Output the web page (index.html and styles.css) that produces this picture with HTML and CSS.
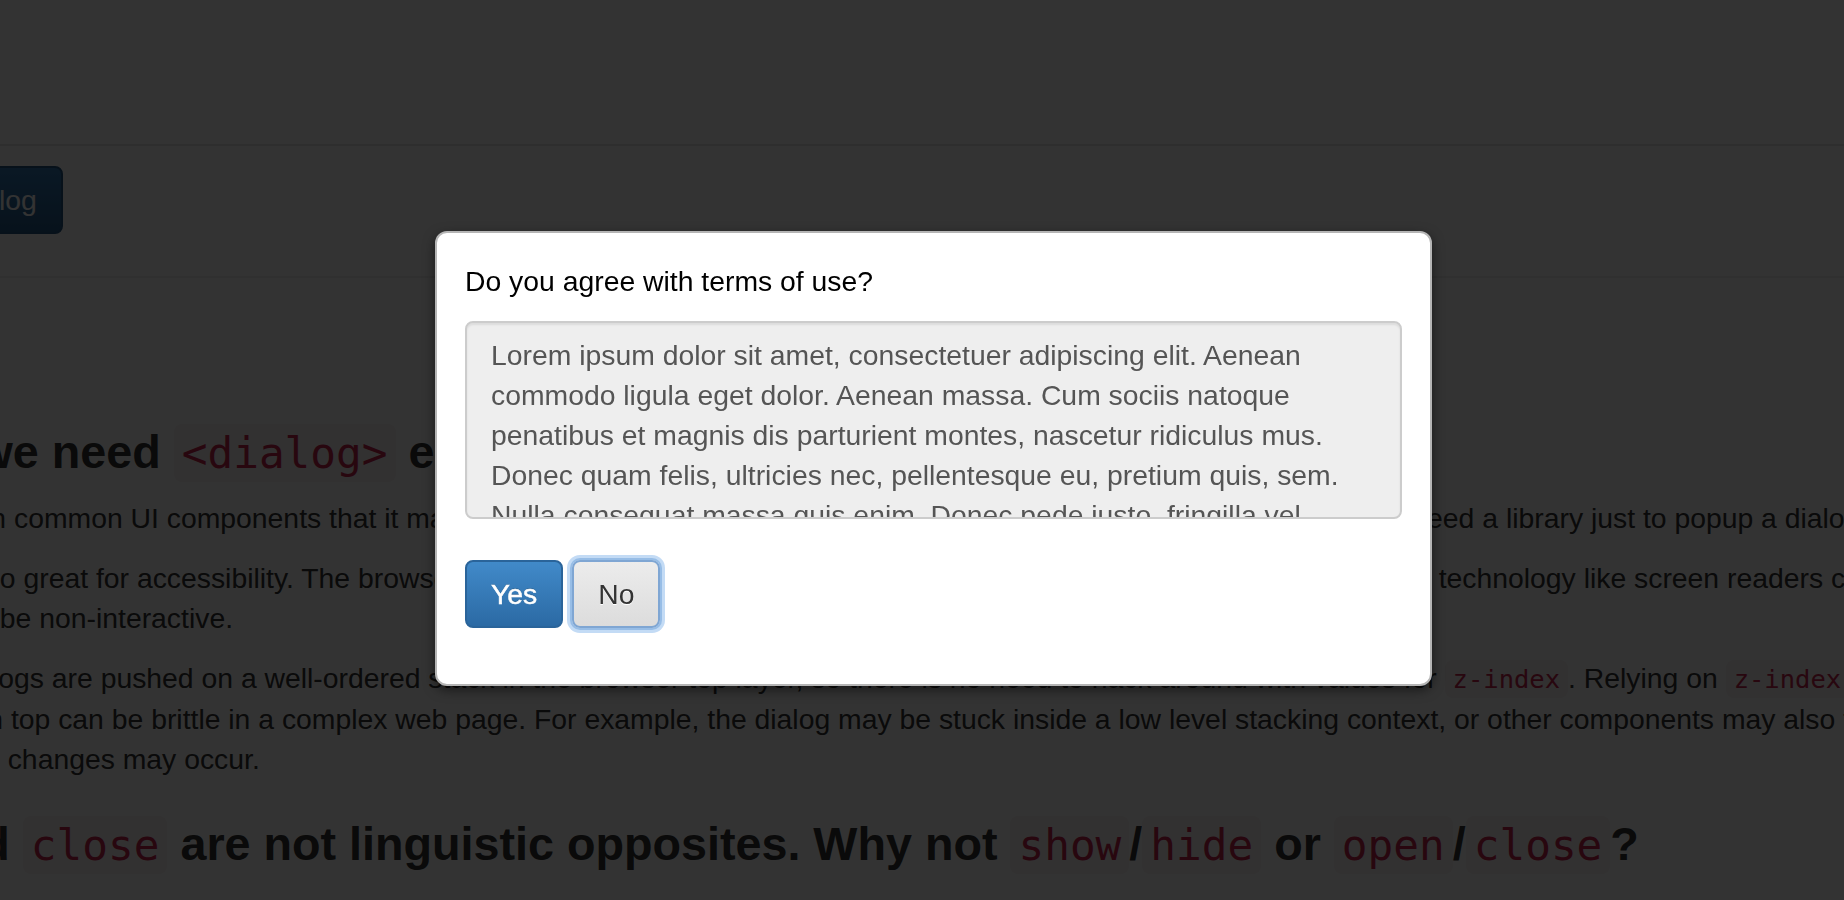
FILE: index.html
```html
<!DOCTYPE html>
<html lang="en">
<head>
<meta charset="utf-8">
<title>Dialog demo</title>
<link rel="stylesheet" href="styles.css">
</head>
<body>
<div class="page">
  <header class="site-header"></header>
  <div class="toolbar">
    <button class="btn btn-primary open-btn" type="button">Open dialog</button>
  </div>
  <main class="article">
    <h3 class="title">Why do we need <code>&lt;dialog&gt;</code> element?</h3>
    <p>Dialogs are such common UI components that it makes sense for browsers to support them natively. This way, you will no longer need a library just to popup a dialog.</p>
    <p>The dialog is also great for accessibility. The browser understands the modality of the dialog, and clearly relays it to all accessibility technology like screen readers can announce it, and it causes all<br>other content to be non-interactive.</p>
    <p>Next, modal dialogs are pushed on a well-ordered stack in the browser top layer, so there is no need to hack around with values for <code>z-index</code>. Relying on <code>z-index</code> to put things above everything else<br>to put dialogs on top can be brittle in a complex web page. For example, the dialog may be stuck inside a low level stacking context, or other components may also try to be<br>on top, so visual changes may occur.</p>
    <h3 class="title"><code>show</code> and <code>close</code> are not linguistic opposites. Why not <code>show</code>/<code>hide</code> or <code>open</code>/<code>close</code>?</h3>
    <p>The names follow the existing conventions of the platform, where the method that opens a window is paired with the one that closes it.</p>
  </main>
</div>

<div class="backdrop"></div>

<div class="dialog" role="dialog" aria-modal="true">
  <p class="dialog-question">Do you agree with terms of use?</p>
  <textarea class="terms" readonly>Lorem ipsum dolor sit amet, consectetuer adipiscing elit. Aenean commodo ligula eget dolor. Aenean massa. Cum sociis natoque penatibus et magnis dis parturient montes, nascetur ridiculus mus. Donec quam felis, ultricies nec, pellentesque eu, pretium quis, sem. Nulla consequat massa quis enim. Donec pede justo, fringilla vel, aliquet nec, vulputate eget, arcu. In enim justo, rhoncus ut, imperdiet a, venenatis vitae, justo.</textarea>
  <div class="dialog-actions">
    <button class="btn btn-yes" type="button">Yes</button>
    <button class="btn btn-no" type="button">No</button>
  </div>
</div>
</body>
</html>
```
FILE: styles.css
```css
html, body {
  margin: 0;
  padding: 0;
}

body {
  background: #ffffff;
  color: #333333;
  font-family: "Liberation Sans", Arial, Helvetica, sans-serif;
  font-size: 28.35px;
  line-height: 40px;
  overflow: hidden;
  width: 1844px;
  height: 900px;
  position: relative;
}

.page {
  margin-left: -205px;
  white-space: nowrap;
}

.site-header {
  height: 144px;
  border-bottom: 2px solid #e7e7e7;
}

.toolbar {
  padding: 20px 0 42px 63px;
  border-bottom: 2px solid #eeeeee;
}

.btn {
  display: inline-block;
  box-sizing: border-box;
  font-family: inherit;
  font-size: 28.35px;
  line-height: 40px;
  padding: 12px 24px;
  border: 2px solid transparent;
  border-radius: 8px;
  margin: 0;
  cursor: pointer;
  white-space: nowrap;
}

.btn-primary {
  color: #ffffff;
  background: linear-gradient(#337ab7, #265a88);
  border-color: #245580;
}

.article {
  padding-top: 109px;
}

.title {
  font-size: 46.7px;
  line-height: 1.1;
  font-weight: bold;
  margin: 40px 0 20px;
}

.article p {
  margin: 0 0 20px;
}

code {
  font-family: "DejaVu Sans Mono", Menlo, monospace;
  font-size: 90%;
  color: #c7254e;
  background: #f9f2f4;
  padding: 4px 8px;
  border-radius: 8px;
}

.title code {
  font-size: 91.5%;
  font-weight: normal;
}

.backdrop {
  position: fixed;
  inset: 0;
  background: rgba(0, 0, 0, 0.8);
}

.dialog {
  position: absolute;
  left: 435px;
  top: 231px;
  width: 997px;
  box-sizing: border-box;
  background: #ffffff;
  color: #000000;
  border: 2px solid #b5b5b5;
  border-radius: 12px;
  padding: 28px;
  box-shadow: 0 4px 12px rgba(0, 0, 0, 0.5);
}

.dialog-question {
  margin: 0 0 20px;
}

.terms {
  display: block;
  box-sizing: border-box;
  width: 100%;
  height: 198px;
  margin: 0 0 41px;
  padding: 12px 24px;
  font-family: inherit;
  font-size: 28.35px;
  line-height: 40px;
  color: #555555;
  background: #eeeeee;
  border: 2px solid #cccccc;
  border-radius: 8px;
  box-shadow: inset 0 2px 2px rgba(0, 0, 0, 0.075);
  resize: none;
  overflow: hidden;
  outline: none;
}

.dialog-actions {
  display: flex;
  gap: 9px;
  margin-bottom: 28px;
}

.btn-yes {
  color: #ffffff;
  -webkit-text-stroke: 0.5px #ffffff;
  background: linear-gradient(#418ac9, #2b6aa4);
  border-color: #2a649a;
  text-shadow: 0 -1px 0 rgba(0, 0, 0, 0.2);
}

.btn-no {
  color: #333333;
  background: linear-gradient(#ececec, #dcdcdc);
  border-color: #7fa6d3;
  text-shadow: 0 1px 0 #ffffff;
  box-shadow: 0 0 0 2px #97bde6, 0 0 0 5px #c3dbf5;
}
```
